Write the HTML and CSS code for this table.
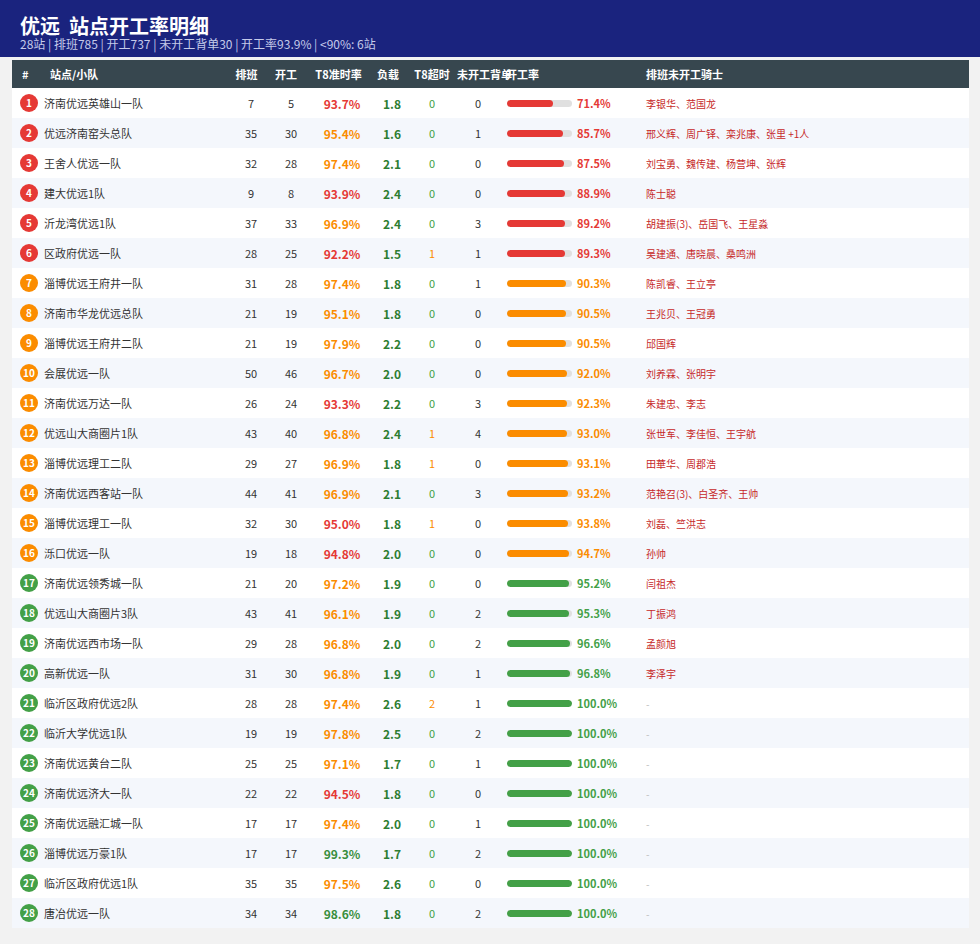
FILE: index.html
```html
<!DOCTYPE html>
<html lang="zh">
<head>
<meta charset="utf-8">
<title>优远 站点开工率明细</title>
<link rel="stylesheet" href="styles.css">
</head>
<body>
<header class="top">
  <div class="title">优远&nbsp;&nbsp;站点开工率明细</div>
  <div class="sub">28站 | 排班785 | 开工737 | 未开工背单30 | 开工率93.9% | &lt;90%: 6站</div>
</header>
<main class="wrap">
  <div class="table">
    <div class="row head">
      <div class="h-idx">#</div>
      <div class="h-name">站点/小队</div>
      <div class="h-c h-p9">排班</div>
      <div class="h-c h-p10">开工</div>
      <div class="h-c h-p7">T8准时率</div>
      <div class="h-c h-p8">负载</div>
      <div class="h-c">T8超时</div>
      <div class="h-un">未开工背单</div>
      <div class="h-rate">开工率</div>
      <div class="h-riders">排班未开工骑士</div>
    </div>

    <div class="row"><div class="c-idx"><span class="badge red">1</span></div><div class="c-name">济南优远英雄山一队</div><div class="c-num">7</div><div class="c-num">5</div><div class="c-t8 red">93.7%</div><div class="c-load">1.8</div><div class="c-late">0</div><div class="c-num">0</div><div class="c-rate"><span class="bar"><span class="fill red" style="width:71.4%"></span></span><span class="pct red">71.4%</span></div><div class="c-riders">李银华、范国龙</div></div>
    <div class="row"><div class="c-idx"><span class="badge red">2</span></div><div class="c-name">优远济南窑头总队</div><div class="c-num">35</div><div class="c-num">30</div><div class="c-t8 orange">95.4%</div><div class="c-load">1.6</div><div class="c-late">0</div><div class="c-num">1</div><div class="c-rate"><span class="bar"><span class="fill red" style="width:85.7%"></span></span><span class="pct red">85.7%</span></div><div class="c-riders">邢义辉、周广铎、栾兆康、张里 +1人</div></div>
    <div class="row"><div class="c-idx"><span class="badge red">3</span></div><div class="c-name">王舍人优远一队</div><div class="c-num">32</div><div class="c-num">28</div><div class="c-t8 orange">97.4%</div><div class="c-load">2.1</div><div class="c-late">0</div><div class="c-num">0</div><div class="c-rate"><span class="bar"><span class="fill red" style="width:87.5%"></span></span><span class="pct red">87.5%</span></div><div class="c-riders">刘宝勇、魏传建、杨营坤、张辉</div></div>
    <div class="row"><div class="c-idx"><span class="badge red">4</span></div><div class="c-name">建大优远1队</div><div class="c-num">9</div><div class="c-num">8</div><div class="c-t8 red">93.9%</div><div class="c-load">2.4</div><div class="c-late">0</div><div class="c-num">0</div><div class="c-rate"><span class="bar"><span class="fill red" style="width:88.9%"></span></span><span class="pct red">88.9%</span></div><div class="c-riders">陈士聪</div></div>
    <div class="row"><div class="c-idx"><span class="badge red">5</span></div><div class="c-name">沂龙湾优远1队</div><div class="c-num">37</div><div class="c-num">33</div><div class="c-t8 orange">96.9%</div><div class="c-load">2.4</div><div class="c-late">0</div><div class="c-num">3</div><div class="c-rate"><span class="bar"><span class="fill red" style="width:89.2%"></span></span><span class="pct red">89.2%</span></div><div class="c-riders">胡建振(3)、岳国飞、王星淼</div></div>
    <div class="row"><div class="c-idx"><span class="badge red">6</span></div><div class="c-name">区政府优远一队</div><div class="c-num">28</div><div class="c-num">25</div><div class="c-t8 red">92.2%</div><div class="c-load">1.5</div><div class="c-late warn">1</div><div class="c-num">1</div><div class="c-rate"><span class="bar"><span class="fill red" style="width:89.3%"></span></span><span class="pct red">89.3%</span></div><div class="c-riders">吴建通、唐晓晨、桑鸣洲</div></div>
    <div class="row"><div class="c-idx"><span class="badge orange">7</span></div><div class="c-name">淄博优远王府井一队</div><div class="c-num">31</div><div class="c-num">28</div><div class="c-t8 orange">97.4%</div><div class="c-load">1.8</div><div class="c-late">0</div><div class="c-num">1</div><div class="c-rate"><span class="bar"><span class="fill orange" style="width:90.3%"></span></span><span class="pct orange">90.3%</span></div><div class="c-riders">陈凯睿、王立亭</div></div>
    <div class="row"><div class="c-idx"><span class="badge orange">8</span></div><div class="c-name">济南市华龙优远总队</div><div class="c-num">21</div><div class="c-num">19</div><div class="c-t8 orange">95.1%</div><div class="c-load">1.8</div><div class="c-late">0</div><div class="c-num">0</div><div class="c-rate"><span class="bar"><span class="fill orange" style="width:90.5%"></span></span><span class="pct orange">90.5%</span></div><div class="c-riders">王兆贝、王冠勇</div></div>
    <div class="row"><div class="c-idx"><span class="badge orange">9</span></div><div class="c-name">淄博优远王府井二队</div><div class="c-num">21</div><div class="c-num">19</div><div class="c-t8 orange">97.9%</div><div class="c-load">2.2</div><div class="c-late">0</div><div class="c-num">0</div><div class="c-rate"><span class="bar"><span class="fill orange" style="width:90.5%"></span></span><span class="pct orange">90.5%</span></div><div class="c-riders">邱国辉</div></div>
    <div class="row"><div class="c-idx"><span class="badge orange">10</span></div><div class="c-name">会展优远一队</div><div class="c-num">50</div><div class="c-num">46</div><div class="c-t8 orange">96.7%</div><div class="c-load">2.0</div><div class="c-late">0</div><div class="c-num">0</div><div class="c-rate"><span class="bar"><span class="fill orange" style="width:92.0%"></span></span><span class="pct orange">92.0%</span></div><div class="c-riders">刘养霖、张明宇</div></div>
    <div class="row"><div class="c-idx"><span class="badge orange">11</span></div><div class="c-name">济南优远万达一队</div><div class="c-num">26</div><div class="c-num">24</div><div class="c-t8 red">93.3%</div><div class="c-load">2.2</div><div class="c-late">0</div><div class="c-num">3</div><div class="c-rate"><span class="bar"><span class="fill orange" style="width:92.3%"></span></span><span class="pct orange">92.3%</span></div><div class="c-riders">朱建忠、李志</div></div>
    <div class="row"><div class="c-idx"><span class="badge orange">12</span></div><div class="c-name">优远山大商圈片1队</div><div class="c-num">43</div><div class="c-num">40</div><div class="c-t8 orange">96.8%</div><div class="c-load">2.4</div><div class="c-late warn">1</div><div class="c-num">4</div><div class="c-rate"><span class="bar"><span class="fill orange" style="width:93.0%"></span></span><span class="pct orange">93.0%</span></div><div class="c-riders">张世军、李佳恒、王宇航</div></div>
    <div class="row"><div class="c-idx"><span class="badge orange">13</span></div><div class="c-name">淄博优远理工二队</div><div class="c-num">29</div><div class="c-num">27</div><div class="c-t8 orange">96.9%</div><div class="c-load">1.8</div><div class="c-late warn">1</div><div class="c-num">0</div><div class="c-rate"><span class="bar"><span class="fill orange" style="width:93.1%"></span></span><span class="pct orange">93.1%</span></div><div class="c-riders">田華华、周郡浩</div></div>
    <div class="row"><div class="c-idx"><span class="badge orange">14</span></div><div class="c-name">济南优远西客站一队</div><div class="c-num">44</div><div class="c-num">41</div><div class="c-t8 orange">96.9%</div><div class="c-load">2.1</div><div class="c-late">0</div><div class="c-num">3</div><div class="c-rate"><span class="bar"><span class="fill orange" style="width:93.2%"></span></span><span class="pct orange">93.2%</span></div><div class="c-riders">范艳召(3)、白圣齐、王帅</div></div>
    <div class="row"><div class="c-idx"><span class="badge orange">15</span></div><div class="c-name">淄博优远理工一队</div><div class="c-num">32</div><div class="c-num">30</div><div class="c-t8 red">95.0%</div><div class="c-load">1.8</div><div class="c-late warn">1</div><div class="c-num">0</div><div class="c-rate"><span class="bar"><span class="fill orange" style="width:93.8%"></span></span><span class="pct orange">93.8%</span></div><div class="c-riders">刘磊、竺洪志</div></div>
    <div class="row"><div class="c-idx"><span class="badge orange">16</span></div><div class="c-name">泺口优远一队</div><div class="c-num">19</div><div class="c-num">18</div><div class="c-t8 red">94.8%</div><div class="c-load">2.0</div><div class="c-late">0</div><div class="c-num">0</div><div class="c-rate"><span class="bar"><span class="fill orange" style="width:94.7%"></span></span><span class="pct orange">94.7%</span></div><div class="c-riders">孙帅</div></div>
    <div class="row"><div class="c-idx"><span class="badge green">17</span></div><div class="c-name">济南优远领秀城一队</div><div class="c-num">21</div><div class="c-num">20</div><div class="c-t8 orange">97.2%</div><div class="c-load">1.9</div><div class="c-late">0</div><div class="c-num">0</div><div class="c-rate"><span class="bar"><span class="fill green" style="width:95.2%"></span></span><span class="pct green">95.2%</span></div><div class="c-riders">闫祖杰</div></div>
    <div class="row"><div class="c-idx"><span class="badge green">18</span></div><div class="c-name">优远山大商圈片3队</div><div class="c-num">43</div><div class="c-num">41</div><div class="c-t8 orange">96.1%</div><div class="c-load">1.9</div><div class="c-late">0</div><div class="c-num">2</div><div class="c-rate"><span class="bar"><span class="fill green" style="width:95.3%"></span></span><span class="pct green">95.3%</span></div><div class="c-riders">丁振鸿</div></div>
    <div class="row"><div class="c-idx"><span class="badge green">19</span></div><div class="c-name">济南优远西市场一队</div><div class="c-num">29</div><div class="c-num">28</div><div class="c-t8 orange">96.8%</div><div class="c-load">2.0</div><div class="c-late">0</div><div class="c-num">2</div><div class="c-rate"><span class="bar"><span class="fill green" style="width:96.6%"></span></span><span class="pct green">96.6%</span></div><div class="c-riders">孟颜旭</div></div>
    <div class="row"><div class="c-idx"><span class="badge green">20</span></div><div class="c-name">高新优远一队</div><div class="c-num">31</div><div class="c-num">30</div><div class="c-t8 orange">96.8%</div><div class="c-load">1.9</div><div class="c-late">0</div><div class="c-num">1</div><div class="c-rate"><span class="bar"><span class="fill green" style="width:96.8%"></span></span><span class="pct green">96.8%</span></div><div class="c-riders">李泽宇</div></div>
    <div class="row"><div class="c-idx"><span class="badge green">21</span></div><div class="c-name">临沂区政府优远2队</div><div class="c-num">28</div><div class="c-num">28</div><div class="c-t8 orange">97.4%</div><div class="c-load">2.6</div><div class="c-late warn">2</div><div class="c-num">1</div><div class="c-rate"><span class="bar"><span class="fill green" style="width:100%"></span></span><span class="pct green">100.0%</span></div><div class="c-riders none">-</div></div>
    <div class="row"><div class="c-idx"><span class="badge green">22</span></div><div class="c-name">临沂大学优远1队</div><div class="c-num">19</div><div class="c-num">19</div><div class="c-t8 orange">97.8%</div><div class="c-load">2.5</div><div class="c-late">0</div><div class="c-num">2</div><div class="c-rate"><span class="bar"><span class="fill green" style="width:100%"></span></span><span class="pct green">100.0%</span></div><div class="c-riders none">-</div></div>
    <div class="row"><div class="c-idx"><span class="badge green">23</span></div><div class="c-name">济南优远黄台二队</div><div class="c-num">25</div><div class="c-num">25</div><div class="c-t8 orange">97.1%</div><div class="c-load">1.7</div><div class="c-late">0</div><div class="c-num">1</div><div class="c-rate"><span class="bar"><span class="fill green" style="width:100%"></span></span><span class="pct green">100.0%</span></div><div class="c-riders none">-</div></div>
    <div class="row"><div class="c-idx"><span class="badge green">24</span></div><div class="c-name">济南优远济大一队</div><div class="c-num">22</div><div class="c-num">22</div><div class="c-t8 red">94.5%</div><div class="c-load">1.8</div><div class="c-late">0</div><div class="c-num">0</div><div class="c-rate"><span class="bar"><span class="fill green" style="width:100%"></span></span><span class="pct green">100.0%</span></div><div class="c-riders none">-</div></div>
    <div class="row"><div class="c-idx"><span class="badge green">25</span></div><div class="c-name">济南优远融汇城一队</div><div class="c-num">17</div><div class="c-num">17</div><div class="c-t8 orange">97.4%</div><div class="c-load">2.0</div><div class="c-late">0</div><div class="c-num">1</div><div class="c-rate"><span class="bar"><span class="fill green" style="width:100%"></span></span><span class="pct green">100.0%</span></div><div class="c-riders none">-</div></div>
    <div class="row"><div class="c-idx"><span class="badge green">26</span></div><div class="c-name">淄博优远万豪1队</div><div class="c-num">17</div><div class="c-num">17</div><div class="c-t8 green">99.3%</div><div class="c-load">1.7</div><div class="c-late">0</div><div class="c-num">2</div><div class="c-rate"><span class="bar"><span class="fill green" style="width:100%"></span></span><span class="pct green">100.0%</span></div><div class="c-riders none">-</div></div>
    <div class="row"><div class="c-idx"><span class="badge green">27</span></div><div class="c-name">临沂区政府优远1队</div><div class="c-num">35</div><div class="c-num">35</div><div class="c-t8 orange">97.5%</div><div class="c-load">2.6</div><div class="c-late">0</div><div class="c-num">0</div><div class="c-rate"><span class="bar"><span class="fill green" style="width:100%"></span></span><span class="pct green">100.0%</span></div><div class="c-riders none">-</div></div>
    <div class="row"><div class="c-idx"><span class="badge green">28</span></div><div class="c-name">唐冶优远一队</div><div class="c-num">34</div><div class="c-num">34</div><div class="c-t8 green">98.6%</div><div class="c-load">1.8</div><div class="c-late">0</div><div class="c-num">2</div><div class="c-rate"><span class="bar"><span class="fill green" style="width:100%"></span></span><span class="pct green">100.0%</span></div><div class="c-riders none">-</div></div>
  </div>
</main>
</body>
</html>
```

FILE: styles.css
```css
html, body {
  margin: 0;
  padding: 0;
}
body {
  background: #f2f2f2;
  font-family: "Noto Sans CJK SC", "Noto Sans", sans-serif;
  color: #333;
  width: 980px;
  height: 944px;
  overflow: hidden;
}
.top {
  background: #1a237e;
  padding: 15px 20px 6px 20px;
  color: #fff;
}
.title {
  font-size: 20px;
  font-weight: 700;
  line-height: 22px;
  white-space: nowrap;
}
.sub {
  font-size: 12px;
  line-height: 14px;
  color: #c5cae9;
  white-space: nowrap;
}
.wrap {
  padding: 3px 11px 0 12px;
}
.table {
  background: #fff;
}
.row {
  display: grid;
  grid-template-columns: 28px 191px 40px 40px 62px 38px 42px 50px 139px 327px;
  height: 30px;
  align-items: center;
  font-size: 11px;
  white-space: nowrap;
}
.row:nth-child(odd) {
  background: #f4f7fc;
}
.row.head {
  height: 28px;
  background: #37474f;
  color: #fff;
  font-weight: 700;
  font-size: 11px;
}
.h-idx {
  padding-left: 10px;
}
.h-name {
  padding-left: 10px;
}
.h-c {
  text-align: center;
}
.h-p9 { padding-right: 9px; }
.h-p10 { padding-right: 10px; }
.h-p7 { padding-right: 7px; }
.h-p8 { padding-right: 8px; }
.h-un {
  padding-left: 4px;
  overflow: visible;
}
.h-rate {
  padding-left: 3px;
}
.h-riders {
  padding-left: 4px;
}
.c-idx {
  display: flex;
  padding-left: 8px;
}
.badge {
  width: 18px;
  height: 18px;
  border-radius: 50%;
  color: #fff;
  font-size: 10px;
  font-weight: 700;
  display: flex;
  align-items: center;
  justify-content: center;
  line-height: 1;
}
.badge.red { background: #e53935; }
.badge.orange { background: #fb8c00; }
.badge.green { background: #43a047; }
.c-name {
  padding-left: 4px;
  color: #333;
}
.c-num {
  text-align: center;
  color: #333;
}
.c-t8 {
  text-align: center;
  font-size: 12px;
  font-weight: 700;
}
.c-t8.red { color: #e53935; }
.c-t8.orange { color: #fb8c00; }
.c-t8.green { color: #388e3c; }
.c-load {
  text-align: center;
  font-size: 12px;
  font-weight: 700;
  color: #2e7d32;
}
.c-late {
  text-align: center;
  color: #43a047;
}
.c-late.warn {
  color: #fb8c00;
}
.c-rate {
  display: flex;
  align-items: center;
  padding-left: 4px;
}
.bar {
  width: 65px;
  height: 7px;
  border-radius: 4px;
  background: #e0e0e0;
  display: flex;
  overflow: hidden;
}
.fill {
  height: 100%;
  border-radius: 4px;
}
.fill.red { background: #e53935; }
.fill.orange { background: #fb8c00; }
.fill.green { background: #43a047; }
.pct {
  margin-left: 5px;
  font-size: 11px;
  font-weight: 700;
}
.pct.red { color: #e53935; }
.pct.orange { color: #fb8c00; }
.pct.green { color: #43a047; }
.c-riders {
  padding-left: 4px;
  font-size: 10px;
  color: #c62828;
}
.c-riders.none {
  color: #bbb;
}
```
